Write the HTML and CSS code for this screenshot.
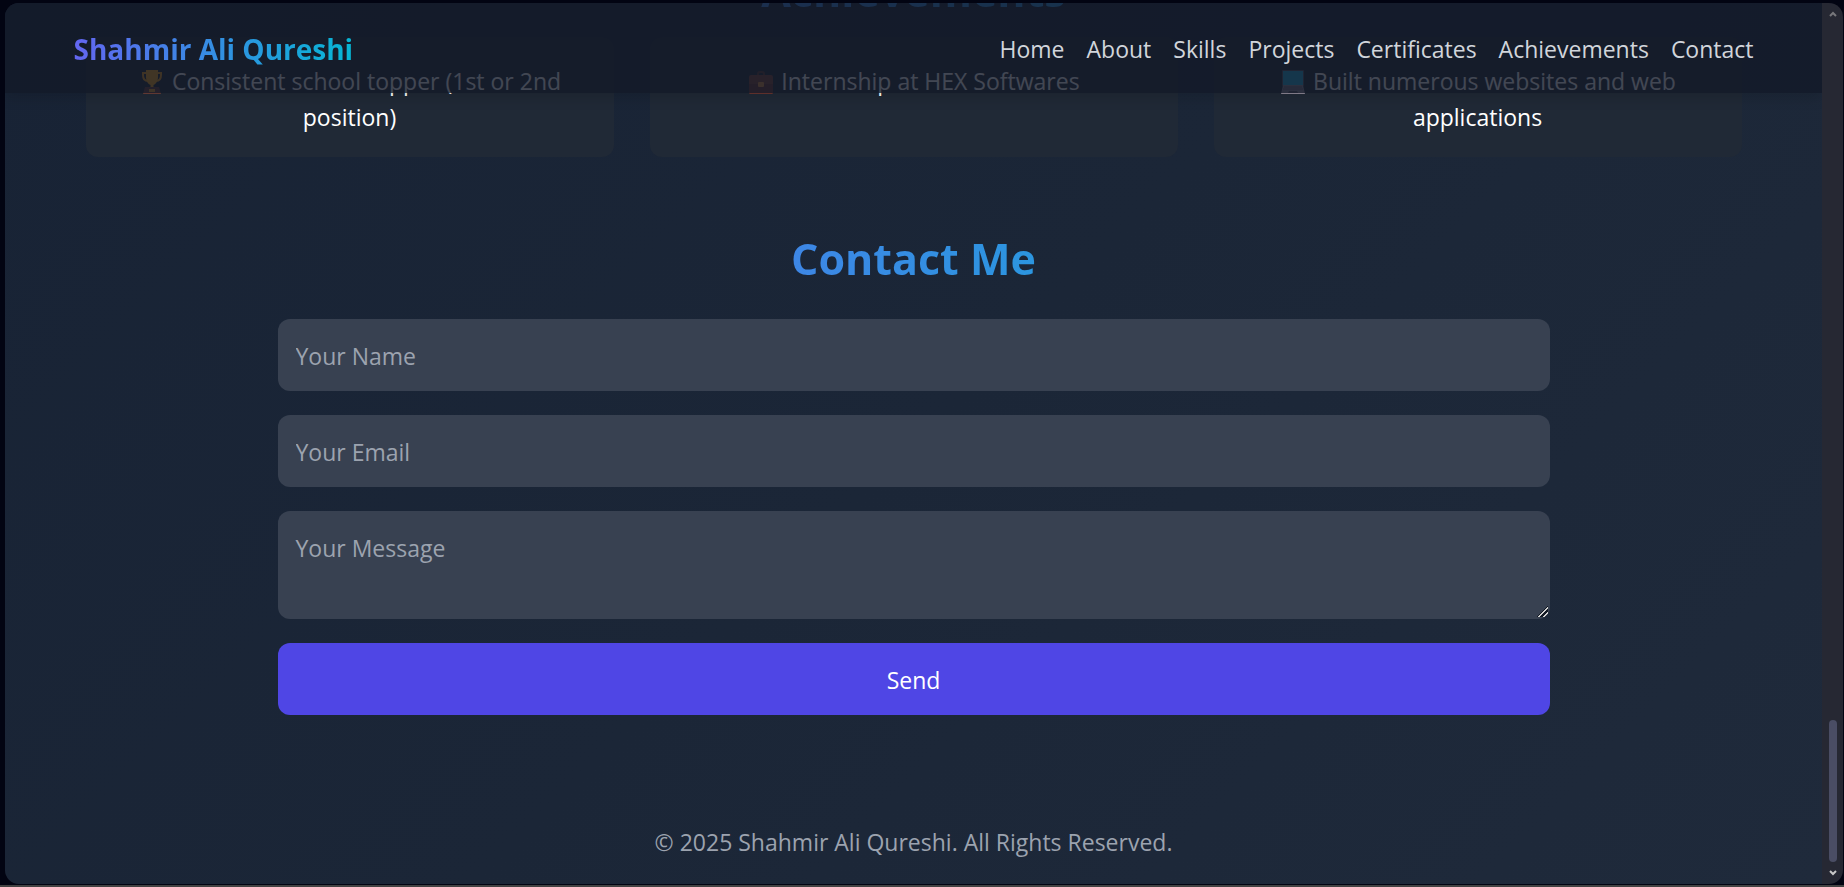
FILE: index.html
```html
<!DOCTYPE html>
<html lang="en">
<head>
<meta charset="utf-8">
<title>Shahmir Ali Qureshi</title>
<link rel="stylesheet" href="styles.css">
</head>
<body>
<div class="window">
  <div class="page">
    <header class="navbar">
      <div class="navbar-inner">
        <span class="logo">Shahmir Ali Qureshi</span>
        <nav class="nav-links">
          <a href="#home">Home</a>
          <a href="#about">About</a>
          <a href="#skills">Skills</a>
          <a href="#projects">Projects</a>
          <a href="#certificates">Certificates</a>
          <a href="#achievements">Achievements</a>
          <a href="#contact">Contact</a>
        </nav>
      </div>
    </header>

    <section class="achievements" id="achievements">
      <h2 class="title">Achievements</h2>
      <div class="cards">
        <p class="card"><svg class="emoji" viewBox="2 0 28 24" aria-hidden="true"><path d="M11 3H7v2c0 4 2 6 5 6M21 3h4v2c0 4-2 6-5 6" fill="none" stroke="#e89a1c" stroke-width="2"/><path d="M10 0h12v7c0 4-2 7-4.500 8v2h-3v-2C12 14 10 11 10 7z" fill="#f2a31b"/><path d="M9 17h14l2 7H7z" fill="#6b3f38"/><path d="M13 19h6v3h-6z" fill="#e9a72c"/></svg> Consistent school topper (1st or 2nd position)</p>
        <p class="card"><svg class="emoji" viewBox="2 0 28 24" aria-hidden="true"><path d="M13 6V4q0-2 2-2h2q2 0 2 2v2" fill="none" stroke="#5d3931" stroke-width="2"/><rect x="4" y="5" width="24" height="19" rx="2" fill="#7d4033"/><path d="M4 14h24v8q0 2-2 2H6q-2 0-2-2z" fill="#69352f"/><rect x="13" y="12" width="6" height="5" rx="1" fill="#d98b3e"/></svg> Internship at HEX Softwares</p>
        <p class="card"><svg class="emoji" viewBox="2 0 28 24" aria-hidden="true"><rect x="5" y="0" width="22" height="16" rx="1" fill="#54505f"/><rect x="6" y="1" width="20" height="14" fill="#20a8d8"/><path d="M6 15h20l2 9H4z" fill="#8d8795"/><path d="M7 17h18M6 19h20" stroke="#625d6c" stroke-width="1"/><path d="M12 21h8l1 2H11z" fill="#54505f"/></svg> Built numerous websites and web applications</p>
      </div>
    </section>

    <section class="contact" id="contact">
      <h2 class="title">Contact Me</h2>
      <form class="contact-form">
        <input class="field" type="text" placeholder="Your Name" aria-label="Your Name">
        <input class="field" type="email" placeholder="Your Email" aria-label="Your Email">
        <textarea class="field" rows="2" placeholder="Your Message" aria-label="Your Message"></textarea>
        <button class="send" type="button">Send</button>
      </form>
    </section>

    <footer class="footer">© 2025 Shahmir Ali Qureshi. All Rights Reserved.</footer>
  </div>
  <div class="scrollbar" aria-hidden="true">
    <svg class="arrow arrow-up" viewBox="0 0 8 6"><path d="M1 5l3-3 3 3"/></svg>
    <div class="thumb"></div>
    <svg class="arrow" viewBox="0 0 8 6"><path d="M1 1l3 3 3-3"/></svg>
  </div>
</div>
</body>
</html>
```
FILE: styles.css
```css
* {
  box-sizing: border-box;
  margin: 0;
}

html {
  overflow: hidden;
}

body {
  height: 100vh;
  padding: 3px 1px 1px 5px;
  border-bottom: 2px solid #434343;
  background: #020412;
  color: #fff;
  font: 23px/36px "Open Sans", "Noto Sans", sans-serif;
  overflow: hidden;
}

.window {
  display: flex;
  height: 100%;
  border-radius: 14px;
  overflow: hidden;
}

/* The page is held at the end of its scroll range. */
.page {
  position: relative;
  flex: 1;
  display: flex;
  flex-direction: column;
  justify-content: flex-end;
  overflow: hidden;
  background: linear-gradient(135deg, #182335, #1b2637 50%, #1f2a3b);
}

.navbar {
  position: absolute;
  top: 0;
  left: 0;
  right: 0;
  z-index: 1;
  background: rgba(19, 25, 40, 0.8);
  box-shadow: 0 6px 12px rgba(0, 0, 0, 0.12);
}

.navbar-inner {
  display: flex;
  justify-content: space-between;
  align-items: center;
  max-width: 1728px;
  margin: 0 auto;
  padding: 25px 24px 23px;
}

.logo {
  font-size: 28px;
  line-height: 42px;
  font-weight: 700;
  background: linear-gradient(to right, #6366f1, #06b6d4);
  -webkit-background-clip: text;
  background-clip: text;
  color: transparent;
}

.nav-links {
  display: flex;
  gap: 22px;
}

.nav-links a {
  color: #d1d5db;
  text-decoration: none;
}

.achievements,
.contact {
  flex: none;
  width: 100%;
  margin: 0 auto;
  padding: 36px;
  text-align: center;
}

.achievements {
  max-width: 1728px;
}

.contact {
  max-width: 1344px;
}

.title {
  margin-bottom: 30px;
  font-size: 43px;
  line-height: 60px;
  font-weight: 700;
  background: linear-gradient(to right, #6366f1, #06b6d4);
  -webkit-background-clip: text;
  background-clip: text;
  color: transparent;
}

.achievements .title {
  margin-bottom: 16px;
}

.cards {
  display: grid;
  grid-template-columns: repeat(3, 1fr);
  gap: 36px;
}

.card {
  padding: 26px 24px 22px;
  border-radius: 12px;
  background: #202936;
}

.emoji {
  width: 28px;
  height: 24px;
  vertical-align: -4px;
}

.contact-form {
  display: grid;
  gap: 24px;
}

.field,
.send {
  display: block;
  width: 100%;
  padding: 19px 18px 17px;
  border: 0;
  border-radius: 12px;
  font: inherit;
  color: #fff;
}

.field {
  background: #384151;
}

.field::placeholder {
  color: #9ca3af;
  opacity: 1;
}

.field::-webkit-resizer {
  background:
    linear-gradient(135deg, transparent 46%, #111722 46% 52%, #d0d0d0 52% 62%, #111722 62% 74%, #d0d0d0 74% 84%, transparent 84%)
    2px 2px / 11px 11px no-repeat;
}

.send {
  background: #4f46e5;
}

.footer {
  flex: none;
  margin-top: 48px;
  padding: 25px 24px 24px;
  text-align: center;
  color: #9ca3af;
}

.scrollbar {
  flex: none;
  display: flex;
  flex-direction: column;
  align-items: center;
  gap: 8px;
  width: 21px;
  padding: 8px 0;
  background: #262833;
}

.arrow {
  width: 8px;
  height: 6px;
  fill: none;
  stroke: #c8c8c8;
  stroke-width: 2;
}

.arrow-up {
  stroke: #77777b;
}

.thumb {
  width: 8px;
  height: 142px;
  margin-top: auto;
  border-radius: 4px;
  background: #4a4d64;
}
```
